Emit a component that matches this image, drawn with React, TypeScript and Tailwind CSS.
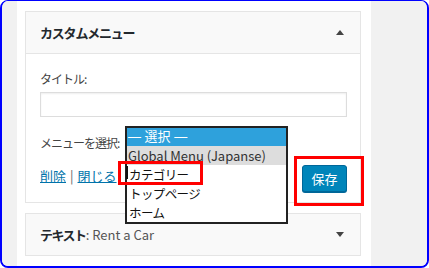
import { useState } from "react";

const font = { fontFamily: '"Noto Sans CJK JP", "Noto Sans", sans-serif' };

const menuOptions = ["— 選択 —", "Global Menu (Japanse)", "カテゴリー", "トップページ", "ホーム"];

function WidgetHeader({ title, open }: { title: React.ReactNode; open?: boolean }) {
  return (
    <div className="flex h-[41px] items-center justify-between bg-[#f9f9f9] pl-[14px] pr-[16px]">
      <div className="text-[13px] font-bold text-[#23282d]">{title}</div>
      {open ? (
        <span className="h-0 w-0 border-x-[4px] border-b-[5px] border-x-transparent border-b-[#444]" />
      ) : (
        <span className="h-0 w-0 border-x-[4px] border-t-[5px] border-x-transparent border-t-[#444]" />
      )}
    </div>
  );
}

export default function App() {
  const [selected] = useState(0);

  return (
    <div
      className="flex h-[268px] w-[429px] overflow-hidden rounded-[8px] border-x-2 border-b-2 border-t border-[#0000ff] bg-[#f1f1f1]"
      style={font}
    >
      <div className="w-[15px] shrink-0 bg-[#f1f1f1]" />
      <div className="relative w-[354px] shrink-0 bg-white pl-[8px] pt-[10px]">
        {/* custom menu widget */}
        <div className="w-[336px] border border-[#e5e5e5]">
          <WidgetHeader title={<span className="tracking-[-1.2px]">カスタムメニュー</span>} open />
          <div className="border-t border-[#e5e5e5] px-[14px] pb-[10px] pt-[16px] text-[13px] text-[#444]">
            <div className="text-[12px] leading-[18px] tracking-[-1px]">タイトル:</div>
            <div className="mt-[4px] h-[25px] w-[307px] border border-[#ddd] shadow-[inset_0_1px_2px_rgba(0,0,0,0.07)]" />
            <div className="mt-[16px] flex h-[20px] items-center text-[12px] tracking-[-1px]">
              メニューを選択:
            </div>
            <div className="mt-[12px] flex items-center justify-between">
              <div className="mb-[5px] flex items-center gap-[4px]">
                <a className="text-[#0073aa] underline">削除</a>
                <span className="text-[#666]">|</span>
                <a className="text-[#0073aa] underline">閉じる</a>
              </div>
              <button className="mr-[-1px] h-[27px] w-[45px] rounded-[3px] border border-[#006799] bg-[#0085ba] text-[13px] text-white shadow-[0_1px_0_#006799]">
                保存
              </button>
            </div>
          </div>
        </div>

        {/* text widget */}
        <div className="mt-[10px] w-[336px] border border-[#e5e5e5]">
          <WidgetHeader
            title={
              <>
                <span className="tracking-[-1.5px]">テキスト</span>
                <span className="font-normal text-[#555]">: Rent a Car</span>
              </>
            }
          />
        </div>

        {/* open select list */}
        <div className="absolute left-[108px] top-[125px] w-[163px] border-2 border-[#222] bg-white text-[13px] leading-[19px] text-[#111]">
          {menuOptions.map((o, i) => (
            <div
              key={o}
              className={
                i === selected
                  ? "h-[18px] bg-[#2ea1dc] pl-[1px] font-['Liberation_Sans','Noto_Sans_CJK_JP',sans-serif] leading-[18px] text-white"
                  : i === 1
                  ? "bg-[#dddddd] pl-[1px] text-[#333]"
                  : "pl-[2px] text-[12.5px] tracking-[-0.6px]"
              }
            >
              {o}
            </div>
          ))}
        </div>
        <div className="absolute left-[109px] top-[165px] h-[13px] w-[2px] bg-[#111]" />

        {/* highlight boxes */}
        <div className="absolute left-[101px] top-[160px] h-[24px] w-[85px] border-[3px] border-[#ff0000]" />
        <div className="absolute left-[277px] top-[155px] h-[50px] w-[70px] border-[3px] border-[#ff0000]" />
      </div>
      <div className="flex-1 bg-[#f1f1f1]" />
    </div>
  );
}
